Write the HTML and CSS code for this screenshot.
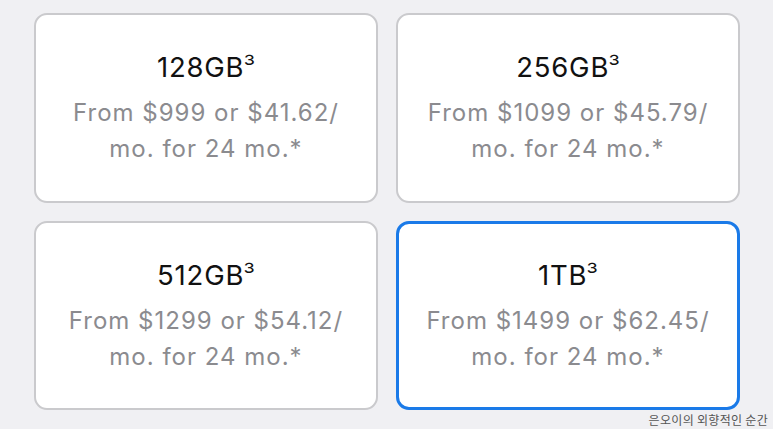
FILE: index.html
```html
<!DOCTYPE html>
<html lang="en">
<head>
<meta charset="utf-8">
<link rel="stylesheet" href="styles.css">
</head>
<body>
<div class="grid">
  <div class="card">
    <div class="title">128GB<span class="sup">³</span></div>
    <div class="price">From $999 or $41.62/<br>mo. for 24 mo.*</div>
  </div>
  <div class="card">
    <div class="title">256GB<span class="sup">³</span></div>
    <div class="price">From $1099 or $45.79/<br>mo. for 24 mo.*</div>
  </div>
  <div class="card">
    <div class="title">512GB<span class="sup">³</span></div>
    <div class="price">From $1299 or $54.12/<br>mo. for 24 mo.*</div>
  </div>
  <div class="card selected">
    <div class="title">1TB<span class="sup">³</span></div>
    <div class="price">From $1499 or $62.45/<br>mo. for 24 mo.*</div>
  </div>
</div>
<div class="watermark">은오이의 외향적인 순간</div>
</body>
</html>
```
FILE: styles.css
```css
html, body {
  margin: 0;
  padding: 0;
}
body {
  width: 773px;
  height: 429px;
  overflow: hidden;
  background: #f0f0f3;
  font-family: Inter, "Liberation Sans", "Noto Sans CJK KR", sans-serif;
  position: relative;
}
.grid {
  display: grid;
  grid-template-columns: 344px 344px;
  grid-template-rows: 190px 189px;
  column-gap: 18px;
  row-gap: 18px;
  padding: 13px 0 0 34px;
}
.card {
  box-sizing: border-box;
  background: #fff;
  border: 2px solid #cacacd;
  border-radius: 13px;
  display: flex;
  flex-direction: column;
  align-items: center;
  padding-top: 33px;
}
.card.selected {
  border: 3px solid #1a7ae8;
  padding-top: 32px;
}
.title {
  font-size: 27.5px;
  line-height: 38px;
  color: #111;
  letter-spacing: 0.8px;
}
.sup {
  font-size: 27px;
  line-height: 0;
  letter-spacing: 0;
  margin-left: -1px;
  font-weight: 300;
}
.price {
  margin-top: 9px;
  font-size: 24px;
  line-height: 36px;
  color: #8b8b8f;
  text-align: center;
  letter-spacing: 1px;
}
.watermark {
  position: absolute;
  right: 5px;
  bottom: 1px;
  font-size: 12px;
  color: #555;
  letter-spacing: 0.3px;
  font-family: "Noto Sans CJK KR", sans-serif;
}
```
